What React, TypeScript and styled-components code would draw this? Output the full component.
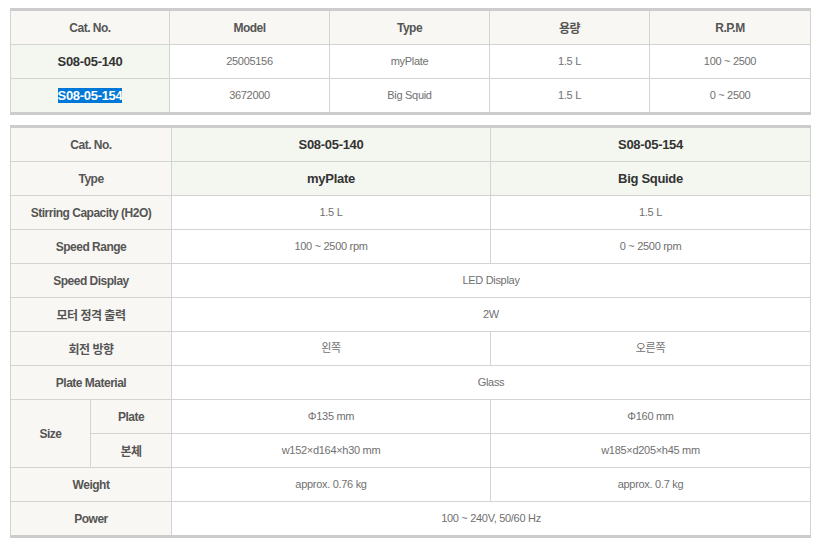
import React from "react";
import styled, { createGlobalStyle } from "styled-components";

const Global = createGlobalStyle`
  html, body { margin: 0; padding: 0; background: #fff; }
  body { font-family: "Liberation Sans", "Noto Sans CJK KR", sans-serif; }
`;

const Page = styled.div`
  padding: 8px 0 0 10px;
  display: flex;
  flex-direction: column;
  gap: 10px;
  width: 800px;
`;

const Table = styled.table`
  width: 800px;
  border-collapse: collapse;
  table-layout: fixed;
  border-top: 3px solid #cccccc;
  border-bottom: 3px solid #cccccc;
`;

const Th = styled.th<{ $tone?: "beige" | "green" }>`
  height: 33px;
  padding: 0;
  border: 1px solid #d3d3d3;
  background: ${(p) => (p.$tone === "green" ? "#f4f6f0" : "#f9f7f3")};
  color: #555;
  font-size: 12px;
  font-weight: bold;
  letter-spacing: -0.5px;
  text-align: center;
  vertical-align: middle;
  font-family: "Liberation Sans", "Noto Sans CJK KR", sans-serif;
`;

const Td = styled.td<{ $strong?: boolean; $green?: boolean }>`
  height: 33px;
  padding: 0;
  border: 1px solid #d3d3d3;
  background: ${(p) => (p.$green ? "#f4f6f0" : "#ffffff")};
  color: ${(p) => (p.$strong ? "#333" : "#707070")};
  font-size: ${(p) => (p.$strong ? "13px" : "11px")};
  font-weight: ${(p) => (p.$strong ? "bold" : "normal")};
  letter-spacing: ${(p) => (p.$strong ? "-0.3px" : "-0.3px")};
  text-align: center;
  vertical-align: middle;
  line-height: 15px;
  font-family: "Liberation Sans", "Noto Sans CJK KR", sans-serif;
`;

const Selected = styled.span`
  background: #0078d7;
  color: #fff;
`;

export default function App() {
  return (
    <>
      <Global />
      <Page>
        <Table>
          <colgroup>
            <col style={{ width: 159 }} />
            <col style={{ width: 160 }} />
            <col style={{ width: 160 }} />
            <col style={{ width: 160 }} />
            <col style={{ width: 161 }} />
          </colgroup>
          <thead>
            <tr>
              <Th>Cat. No.</Th>
              <Th>Model</Th>
              <Th>Type</Th>
              <Th>용량</Th>
              <Th>R.P.M</Th>
            </tr>
          </thead>
          <tbody>
            <tr>
              <Td $strong $green>S08-05-140</Td>
              <Td>25005156</Td>
              <Td>myPlate</Td>
              <Td>1.5 L</Td>
              <Td>100 ~ 2500</Td>
            </tr>
            <tr>
              <Td $strong $green>
                <Selected>S08-05-154</Selected>
              </Td>
              <Td>3672000</Td>
              <Td>Big Squid</Td>
              <Td>1.5 L</Td>
              <Td>0 ~ 2500</Td>
            </tr>
          </tbody>
        </Table>

        <Table>
          <colgroup>
            <col style={{ width: 80 }} />
            <col style={{ width: 81 }} />
            <col style={{ width: 319 }} />
            <col style={{ width: 320 }} />
          </colgroup>
          <tbody>
            <tr>
              <Th colSpan={2}>Cat. No.</Th>
              <Td $strong $green>S08-05-140</Td>
              <Td $strong $green>S08-05-154</Td>
            </tr>
            <tr>
              <Th colSpan={2}>Type</Th>
              <Td $strong $green>myPlate</Td>
              <Td $strong $green>Big Squide</Td>
            </tr>
            <tr>
              <Th colSpan={2}>Stirring Capacity (H2O)</Th>
              <Td>1.5 L</Td>
              <Td>1.5 L</Td>
            </tr>
            <tr>
              <Th colSpan={2}>Speed Range</Th>
              <Td>100 ~ 2500 rpm</Td>
              <Td>0 ~ 2500 rpm</Td>
            </tr>
            <tr>
              <Th colSpan={2}>Speed Display</Th>
              <Td colSpan={2}>LED Display</Td>
            </tr>
            <tr>
              <Th colSpan={2}>모터 정격 출력</Th>
              <Td colSpan={2}>2W</Td>
            </tr>
            <tr>
              <Th colSpan={2}>회전 방향</Th>
              <Td>왼쪽</Td>
              <Td>오른쪽</Td>
            </tr>
            <tr>
              <Th colSpan={2}>Plate Material</Th>
              <Td colSpan={2}>Glass</Td>
            </tr>
            <tr>
              <Th rowSpan={2}>Size</Th>
              <Th>Plate</Th>
              <Td>Φ135 mm</Td>
              <Td>Φ160 mm</Td>
            </tr>
            <tr>
              <Th>본체</Th>
              <Td>w152×d164×h30 mm</Td>
              <Td>w185×d205×h45 mm</Td>
            </tr>
            <tr>
              <Th colSpan={2}>Weight</Th>
              <Td>approx. 0.76 kg</Td>
              <Td>approx. 0.7 kg</Td>
            </tr>
            <tr>
              <Th colSpan={2}>Power</Th>
              <Td colSpan={2}>100 ~ 240V, 50/60 Hz</Td>
            </tr>
          </tbody>
        </Table>
      </Page>
    </>
  );
}
